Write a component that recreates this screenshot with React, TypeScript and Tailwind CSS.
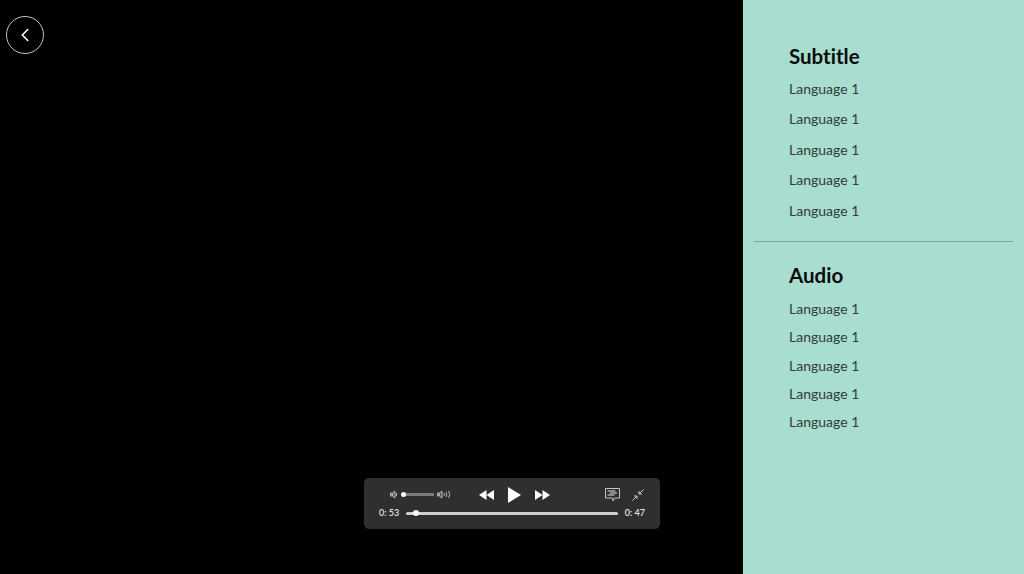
import { ChevronLeft } from 'lucide-react';

const subtitleLanguages = ['Language 1', 'Language 1', 'Language 1', 'Language 1', 'Language 1'];
const audioLanguages = ['Language 1', 'Language 1', 'Language 1', 'Language 1', 'Language 1'];

function SpeakerLow() {
  return (
    <svg width="7" height="9" viewBox="0 0 7 9" fill="none" stroke="#b8b8b8" strokeWidth="1">
      <path d="M.5 3h2v3h-2z" fill="#777" />
      <path d="M2.500 3 5 1v7L2.500 6z" fill="#555" />
      <path d="M6.500 3v3" />
    </svg>
  );
}

function SpeakerHigh() {
  return (
    <svg width="14" height="9" viewBox="0 0 14 9" fill="none" stroke="#b8b8b8" strokeWidth="1">
      <path d="M.5 3h2v3h-2z" fill="#777" />
      <path d="M2.500 3 5 1v7L2.500 6z" fill="#555" />
      <path d="M7 3q1 1.500 0 3" />
      <path d="M9 2q1.500 2.500 0 5" />
      <path d="M11.500 1q2.500 3.500 0 7" />
    </svg>
  );
}

function Rewind() {
  return (
    <svg width="15" height="10" viewBox="0 0 15 10" fill="white">
      <path d="M7.500 0v10L0 5z" />
      <path d="M15 0v10L7.500 5z" />
    </svg>
  );
}

function Forward() {
  return (
    <svg width="15" height="10" viewBox="0 0 15 10" fill="white">
      <path d="M0 0v10l7.500-5z" />
      <path d="M7.500 0v10L15 5z" />
    </svg>
  );
}

function Play() {
  return (
    <svg width="13" height="16" viewBox="0 0 13 16" fill="white">
      <path d="M0 0v16l13-8z" />
    </svg>
  );
}

function Captions() {
  return (
    <svg width="15" height="14" viewBox="0 0 15 14" fill="none" stroke="#c4c4c4" strokeWidth="1">
      <path d="M.5.5h14v9.500H9.500L8 13l-.5-3H.5z" />
      <path d="M2.500 3h8M5 5h7M2.500 7h7" stroke="#e0e0e0" />
    </svg>
  );
}

function Shrink() {
  return (
    <svg width="12" height="12" viewBox="0 0 12 12" fill="none" stroke="#cfcfcf" strokeWidth="1">
      <path d="M11.500.5 7 5M7 2v3h3" />
      <path d="M.5 11.500 5 7M2 7h3v3" />
    </svg>
  );
}

function LanguageList({
  title,
  items,
  rowClass,
  listClass,
}: {
  title: string;
  items: string[];
  rowClass: string;
  listClass: string;
}) {
  return (
    <div className="pl-[46px]">
      <h2 className="text-[20.5px] leading-[24px] font-bold text-[#0b0b0b] [font-variant-ligatures:none]">{title}</h2>
      <ul className={listClass}>
        {items.map((item, i) => (
          <li key={i} className={`text-[14px] text-[#333a38] flex items-center ${rowClass}`}>
            {item}
          </li>
        ))}
      </ul>
    </div>
  );
}

export default function App() {
  return (
    <div className="flex w-[1024px] h-[574px] overflow-hidden font-['Lato',sans-serif]">
      {/* Video area */}
      <div className="relative flex-1 bg-black">
        <button className="absolute left-[6px] top-[16px] w-[38px] h-[38px] rounded-full border border-[#c4c4c4] flex items-center justify-center">
          <ChevronLeft className="w-[22px] h-[22px] text-white" strokeWidth={1.75} />
        </button>

        {/* Player controls */}
        <div className="absolute left-[364px] top-[478px] w-[296px] h-[51px] rounded-[5px] bg-[#2f2f2f] px-[15px] pt-[6px] text-white">
          <div className="flex items-center h-[21px] pl-[11px] pr-[1px]">
            <div className="flex items-center w-[61px]">
              <SpeakerLow />
              <div className="relative w-[31px] h-[3px] bg-[#7c7c7c] ml-[6px] shrink-0">
                <div className="absolute left-[-2px] top-[-1px] w-[5px] h-[5px] rounded-full bg-white" />
              </div>
              <span className="ml-[3px] shrink-0">
                <SpeakerHigh />
              </span>
            </div>
            <div className="flex items-center gap-[14px] ml-[28px]">
              <Rewind />
              <Play />
              <Forward />
            </div>
            <div className="flex items-center gap-[12px] ml-auto">
              <Captions />
              <Shrink />
            </div>
          </div>
          <div className="flex items-center h-[15px] text-[9px] font-semibold text-[#e0e0e0]">
            <span className="w-[27px] whitespace-nowrap">0: 53</span>
            <div className="relative flex-1 h-[3px] mt-[1px] bg-[#cfcfcf] rounded-full mr-[7px]">
              <div className="absolute left-[7px] top-[-2px] w-[6px] h-[6px] rounded-full bg-white" />
            </div>
            <span className="whitespace-nowrap">0: 47</span>
          </div>
        </div>
      </div>

      {/* Language panel */}
      <div className="w-[281px] bg-[#a8ded0] pt-[44px]">
        <LanguageList title="Subtitle" items={subtitleLanguages} rowClass="h-[30.500px]" listClass="mt-[5px]" />
        <div className="mx-[11px] mt-[15px] h-px bg-[#7fa89d]" />
        <div className="mt-[21px]">
          <LanguageList title="Audio" items={audioLanguages} rowClass="h-[28.250px]" listClass="mt-[8px]" />
        </div>
      </div>
    </div>
  );
}
